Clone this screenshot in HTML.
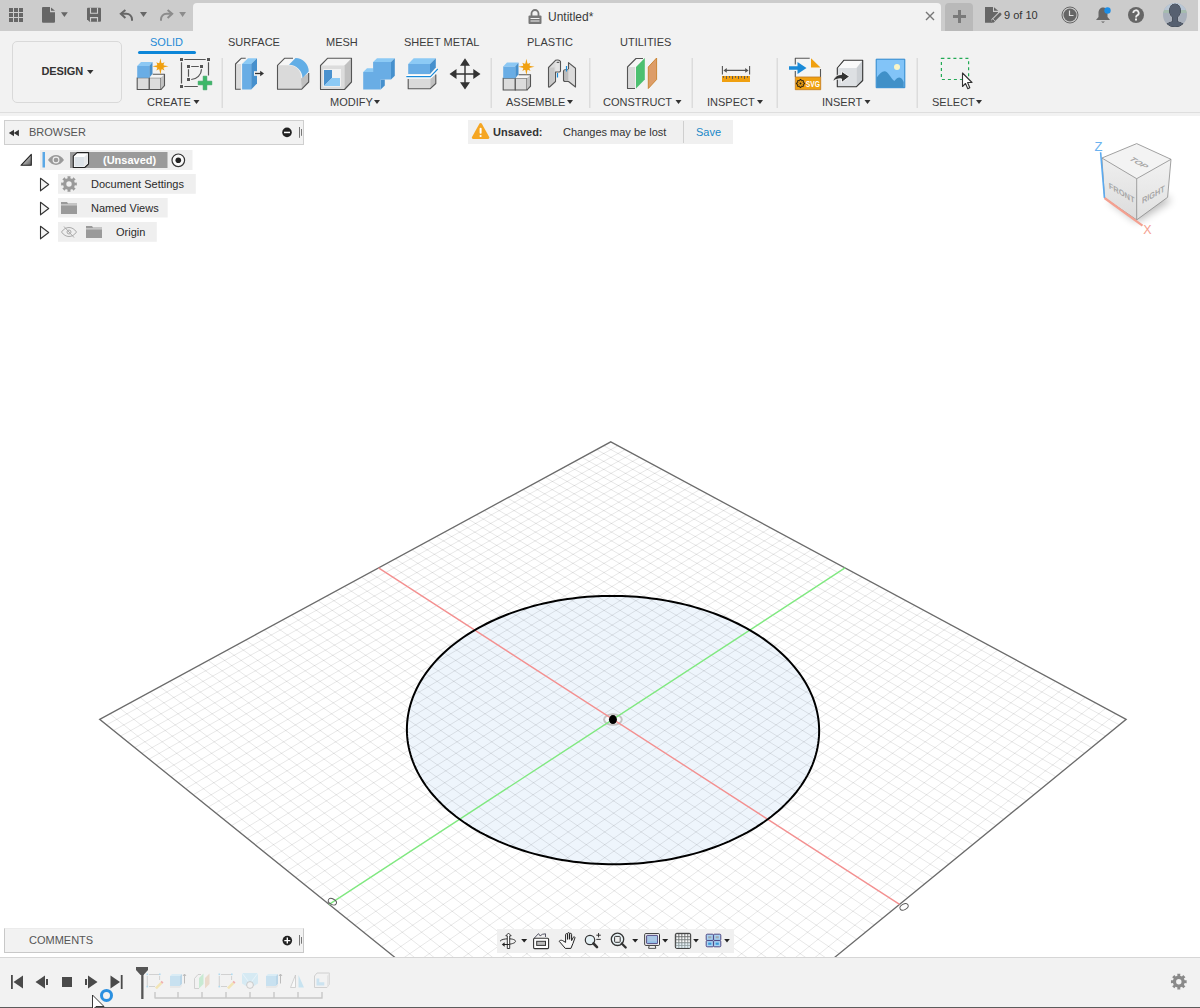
<!DOCTYPE html>
<html><head><meta charset="utf-8">
<style>
*{margin:0;padding:0;box-sizing:border-box}
html,body{width:1200px;height:1008px;overflow:hidden;background:#fff;font-family:"Liberation Sans",sans-serif;color:#3c3c3c}
.a{position:absolute}
.t{position:absolute;white-space:nowrap;line-height:1}
svg{display:block}
</style></head><body>
<!-- canvas grid -->
<svg width="1200" height="841" viewBox="0 116 1200 841" style="position:absolute;left:0;top:116px">
<path d="M767.73 819.26L771.43 816.45L775.01 813.58L778.46 810.66L781.78 807.68L784.97 804.64L788.02 801.56L790.93 798.42L793.71 795.24L796.35 792.02L798.84 788.76L801.20 785.46L803.41 782.13L805.47 778.76L807.40 775.37L809.18 771.95L810.81 768.51L812.29 765.04L813.63 761.56L814.83 758.06L815.88 754.55L816.78 751.03L817.53 747.50L818.14 743.97L818.61 740.43L818.93 736.90L819.11 733.37L819.14 729.84L819.03 726.32L818.79 722.81L818.40 719.31L817.87 715.83L817.20 712.36L816.40 708.92L815.47 705.49L814.40 702.09L813.19 698.71L811.86 695.37L810.40 692.05L808.81 688.76L807.10 685.51L805.26 682.29L803.30 679.11L801.23 675.97L799.03 672.87L796.72 669.81L794.30 666.80L791.76 663.83L789.12 660.91L786.37 658.04L783.52 655.22L780.56 652.45L777.50 649.74L774.35 647.08L771.10 644.47L767.75 641.93L764.32 639.44L760.80 637.01L757.19 634.65L753.50 632.34L749.73 630.10L745.89 627.92L741.96 625.81L737.97 623.76L733.90 621.78L729.76 619.87L725.56 618.02L721.30 616.25L716.98 614.55L712.60 612.91L708.16 611.35L703.68 609.86L699.14 608.44L694.55 607.10L689.93 605.83L685.26 604.64L680.55 603.52L675.80 602.47L671.02 601.50L666.21 600.61L661.37 599.79L656.50 599.05L651.62 598.39L646.71 597.80L641.78 597.30L636.84 596.87L631.88 596.52L626.92 596.24L621.94 596.05L616.97 595.93L611.99 595.89L607.01 595.93L602.03 596.05L597.06 596.24L592.10 596.52L587.15 596.87L582.22 597.30L577.30 597.81L572.40 598.39L567.52 599.05L562.66 599.79L557.84 600.61L553.04 601.50L548.28 602.47L543.55 603.52L538.85 604.64L534.20 605.83L529.59 607.10L525.03 608.45L520.51 609.86L516.05 611.35L511.64 612.91L507.28 614.55L502.99 616.25L498.75 618.03L494.58 619.87L490.47 621.78L486.44 623.76L482.47 625.81L478.58 627.92L474.77 630.10L471.03 632.34L467.38 634.65L463.81 637.02L460.32 639.45L456.93 641.93L453.63 644.48L450.42 647.08L447.30 649.74L444.29 652.46L441.37 655.23L438.56 658.05L435.86 660.92L433.26 663.84L430.77 666.80L428.39 669.82L426.13 672.88L423.98 675.98L421.95 679.12L420.04 682.30L418.26 685.51L416.59 688.77L415.06 692.06L413.65 695.37L412.37 698.72L411.22 702.10L410.20 705.50L409.31 708.93L408.57 712.37L407.95 715.84L407.48 719.32L407.15 722.82L406.95 726.33L406.90 729.85L406.99 733.38L407.22 736.91L407.59 740.44L408.11 743.98L408.78 747.51L409.59 751.04L410.55 754.56L411.65 758.07L412.90 761.57L414.29 765.05L415.83 768.52L417.52 771.96L419.35 775.38L421.32 778.77L423.44 782.14L425.70 785.47L428.11 788.77L430.66 792.03L433.34 795.25L436.17 798.43L439.13 801.57L442.23 804.65L445.46 807.69L448.83 810.67L452.32 813.59L455.95 816.46L459.70 819.27L463.57 822.01L467.56 824.68L471.67 827.29L475.90 829.82L480.24 832.28L484.69 834.67L489.24 836.98L493.90 839.20L498.65 841.35L503.50 843.40L508.44 845.38L513.47 847.26L518.59 849.05L523.78 850.75L529.05 852.36L534.39 853.87L539.80 855.28L545.27 856.59L550.80 857.81L556.38 858.92L562.01 859.93L567.68 860.83L573.39 861.64L579.14 862.33L584.92 862.92L590.72 863.41L596.54 863.79L602.37 864.05L608.21 864.22L614.06 864.27L619.91 864.22L625.75 864.05L631.58 863.78L637.39 863.41L643.19 862.92L648.95 862.33L654.69 861.63L660.39 860.83L666.05 859.92L671.66 858.91L677.23 857.80L682.74 856.59L688.19 855.27L693.57 853.86L698.89 852.35L704.13 850.74L709.30 849.04L714.39 847.25L719.39 845.37L724.30 843.40L729.12 841.34L733.84 839.19L738.46 836.97L742.98 834.66L747.39 832.28L751.69 829.82L755.88 827.28L759.95 824.67L763.90 822.00Z" fill="#eef5fc"/>
<path d="M106.57 724.90L617.97 445.71M113.52 730.51L625.19 449.59M120.52 736.15L632.45 453.50M127.57 741.83L639.74 457.43M134.67 747.56L647.08 461.38M141.81 753.32L654.46 465.35M149.00 759.12L661.88 469.35M156.24 764.96L669.35 473.37M163.54 770.84L676.86 477.41M170.88 776.76L684.41 481.47M178.27 782.72L692.00 485.56M185.72 788.72L699.64 489.67M193.21 794.77L707.32 493.81M200.76 800.86L715.04 497.97M208.36 806.99L722.81 502.15M216.02 813.16L730.63 506.36M223.73 819.38L738.49 510.59M231.49 825.64L746.40 514.85M239.31 831.94L754.35 519.13M247.19 838.30L762.35 523.44M255.12 844.69L770.40 527.77M263.11 851.14L778.49 532.13M271.16 857.63L786.64 536.51M279.26 864.16L794.83 540.92M287.43 870.75L803.07 545.36M295.65 877.38L811.36 549.82M303.94 884.06L819.70 554.31M312.29 890.79L828.09 558.83M320.69 897.57L836.54 563.37M337.70 911.28L853.57 572.55M346.29 918.22L862.17 577.17M354.96 925.20L870.82 581.83M363.68 932.24L879.52 586.51M372.48 939.33L888.28 591.23M381.34 946.47L897.09 595.97M390.26 953.67L905.95 600.74M399.26 960.93L914.87 605.55M408.32 968.24L923.85 610.38M417.46 975.60L932.88 615.24M426.66 983.03L941.97 620.13M435.94 990.51L951.11 625.06M445.29 998.05L960.32 630.01M454.71 1005.64L969.58 635.00M464.20 1013.30L978.90 640.02M473.78 1021.02L988.28 645.07M483.42 1028.80L997.72 650.15M493.15 1036.64L1007.22 655.26M502.95 1044.54L1016.78 660.41M512.83 1052.51L1026.41 665.59M522.79 1060.54L1036.09 670.81M532.83 1068.64L1045.84 676.05M542.95 1076.80L1055.66 681.34M553.15 1085.03L1065.53 686.66M563.44 1093.32L1075.48 692.01M573.81 1101.69L1085.48 697.40M584.27 1110.12L1095.56 702.82M594.81 1118.62L1105.70 708.28M605.44 1127.20L1115.91 713.77" stroke="#000" stroke-opacity="0.095" stroke-width="1" fill="none"/>
<path d="M109.86 713.80L626.75 1127.20M119.98 708.30L637.25 1118.62M130.04 702.84L647.66 1110.12M140.03 697.41L657.99 1101.68M149.95 692.03L668.23 1093.32M159.81 686.67L678.39 1085.02M169.61 681.36L688.46 1076.79M179.34 676.07L698.46 1068.63M189.01 670.82L708.37 1060.53M198.62 665.61L718.21 1052.50M208.16 660.43L727.96 1044.53M217.65 655.28L737.64 1036.63M227.07 650.16L747.24 1028.79M236.43 645.08L756.77 1021.01M245.74 640.03L766.22 1013.29M254.98 635.01L775.60 1005.63M264.17 630.02L784.90 998.03M273.30 625.07L794.13 990.49M282.37 620.14L803.29 983.01M291.38 615.25L812.38 975.59M300.34 610.39L821.40 968.22M309.24 605.55L830.35 960.91M318.09 600.75L839.24 953.66M326.88 595.98L848.05 946.46M335.61 591.24L856.80 939.31M344.30 586.52L865.48 932.22M352.93 581.84L874.10 925.18M361.51 577.18L882.65 918.20M370.03 572.55L891.14 911.26M386.93 563.38L907.93 897.55M395.30 558.83L916.23 890.77M403.62 554.32L924.48 884.04M411.89 549.83L932.66 877.36M420.12 545.36L940.78 870.73M428.29 540.93L948.84 864.14M436.41 536.51L956.85 857.60M444.49 532.13L964.79 851.11M452.52 527.77L972.68 844.67M460.50 523.44L980.51 838.27M468.43 519.13L988.29 831.92M476.32 514.85L996.01 825.62M484.16 510.59L1003.68 819.35M491.96 506.36L1011.29 813.14M499.71 502.15L1018.85 806.96M507.42 497.97L1026.36 800.83M515.08 493.81L1033.81 794.74M522.70 489.67L1041.21 788.70M530.27 485.56L1048.56 782.70M537.80 481.47L1055.86 776.73M545.29 477.41L1063.11 770.81M552.73 473.37L1070.31 764.93M560.13 469.35L1077.46 759.09M567.49 465.35L1084.57 753.29M574.81 461.38L1091.62 747.53M582.09 457.43L1098.63 741.81M589.33 453.50L1105.58 736.13M596.52 449.59L1112.50 730.48M603.68 445.71L1119.36 724.87" stroke="#000" stroke-opacity="0.095" stroke-width="1" fill="none"/>
<path d="M610.80 441.85L1126.18 719.31L616.16 1135.84L99.66 719.33Z" stroke="#6b6b6b" stroke-width="1.3" fill="none"/>
<ellipse cx="612.94" cy="719.52" rx="8.9" ry="5.3" fill="#f8fbfe" stroke="#c4c4c4" stroke-width="2"/>
<path d="M378.51 567.95L899.57 904.38" stroke="#f39090" stroke-width="1.4"/>
<path d="M845.03 567.95L329.16 904.40" stroke="#80e880" stroke-width="1.4"/>
<path d="M767.73 819.26L771.43 816.45L775.01 813.58L778.46 810.66L781.78 807.68L784.97 804.64L788.02 801.56L790.93 798.42L793.71 795.24L796.35 792.02L798.84 788.76L801.20 785.46L803.41 782.13L805.47 778.76L807.40 775.37L809.18 771.95L810.81 768.51L812.29 765.04L813.63 761.56L814.83 758.06L815.88 754.55L816.78 751.03L817.53 747.50L818.14 743.97L818.61 740.43L818.93 736.90L819.11 733.37L819.14 729.84L819.03 726.32L818.79 722.81L818.40 719.31L817.87 715.83L817.20 712.36L816.40 708.92L815.47 705.49L814.40 702.09L813.19 698.71L811.86 695.37L810.40 692.05L808.81 688.76L807.10 685.51L805.26 682.29L803.30 679.11L801.23 675.97L799.03 672.87L796.72 669.81L794.30 666.80L791.76 663.83L789.12 660.91L786.37 658.04L783.52 655.22L780.56 652.45L777.50 649.74L774.35 647.08L771.10 644.47L767.75 641.93L764.32 639.44L760.80 637.01L757.19 634.65L753.50 632.34L749.73 630.10L745.89 627.92L741.96 625.81L737.97 623.76L733.90 621.78L729.76 619.87L725.56 618.02L721.30 616.25L716.98 614.55L712.60 612.91L708.16 611.35L703.68 609.86L699.14 608.44L694.55 607.10L689.93 605.83L685.26 604.64L680.55 603.52L675.80 602.47L671.02 601.50L666.21 600.61L661.37 599.79L656.50 599.05L651.62 598.39L646.71 597.80L641.78 597.30L636.84 596.87L631.88 596.52L626.92 596.24L621.94 596.05L616.97 595.93L611.99 595.89L607.01 595.93L602.03 596.05L597.06 596.24L592.10 596.52L587.15 596.87L582.22 597.30L577.30 597.81L572.40 598.39L567.52 599.05L562.66 599.79L557.84 600.61L553.04 601.50L548.28 602.47L543.55 603.52L538.85 604.64L534.20 605.83L529.59 607.10L525.03 608.45L520.51 609.86L516.05 611.35L511.64 612.91L507.28 614.55L502.99 616.25L498.75 618.03L494.58 619.87L490.47 621.78L486.44 623.76L482.47 625.81L478.58 627.92L474.77 630.10L471.03 632.34L467.38 634.65L463.81 637.02L460.32 639.45L456.93 641.93L453.63 644.48L450.42 647.08L447.30 649.74L444.29 652.46L441.37 655.23L438.56 658.05L435.86 660.92L433.26 663.84L430.77 666.80L428.39 669.82L426.13 672.88L423.98 675.98L421.95 679.12L420.04 682.30L418.26 685.51L416.59 688.77L415.06 692.06L413.65 695.37L412.37 698.72L411.22 702.10L410.20 705.50L409.31 708.93L408.57 712.37L407.95 715.84L407.48 719.32L407.15 722.82L406.95 726.33L406.90 729.85L406.99 733.38L407.22 736.91L407.59 740.44L408.11 743.98L408.78 747.51L409.59 751.04L410.55 754.56L411.65 758.07L412.90 761.57L414.29 765.05L415.83 768.52L417.52 771.96L419.35 775.38L421.32 778.77L423.44 782.14L425.70 785.47L428.11 788.77L430.66 792.03L433.34 795.25L436.17 798.43L439.13 801.57L442.23 804.65L445.46 807.69L448.83 810.67L452.32 813.59L455.95 816.46L459.70 819.27L463.57 822.01L467.56 824.68L471.67 827.29L475.90 829.82L480.24 832.28L484.69 834.67L489.24 836.98L493.90 839.20L498.65 841.35L503.50 843.40L508.44 845.38L513.47 847.26L518.59 849.05L523.78 850.75L529.05 852.36L534.39 853.87L539.80 855.28L545.27 856.59L550.80 857.81L556.38 858.92L562.01 859.93L567.68 860.83L573.39 861.64L579.14 862.33L584.92 862.92L590.72 863.41L596.54 863.79L602.37 864.05L608.21 864.22L614.06 864.27L619.91 864.22L625.75 864.05L631.58 863.78L637.39 863.41L643.19 862.92L648.95 862.33L654.69 861.63L660.39 860.83L666.05 859.92L671.66 858.91L677.23 857.80L682.74 856.59L688.19 855.27L693.57 853.86L698.89 852.35L704.13 850.74L709.30 849.04L714.39 847.25L719.39 845.37L724.30 843.40L729.12 841.34L733.84 839.19L738.46 836.97L742.98 834.66L747.39 832.28L751.69 829.82L755.88 827.28L759.95 824.67L763.90 822.00Z" fill="none" stroke="#000" stroke-width="2"/>
<ellipse cx="612.94" cy="719.52" rx="4" ry="4.4" fill="#000"/>
<ellipse cx="332.36" cy="901.70" rx="4.4" ry="2.8" transform="rotate(28 332.36 901.70)" fill="none" stroke="#555" stroke-width="0.9"/>
<ellipse cx="904.07" cy="906.88" rx="4.4" ry="2.8" transform="rotate(-28 904.07 906.88)" fill="none" stroke="#555" stroke-width="0.9"/>
</svg>

<!-- top bar -->
<div class="a" style="left:0;top:0;width:1200px;height:31px;background:#cccccc"></div>
<div class="a" style="left:1198px;top:0;width:2px;height:31px;background:#f0f0f0"></div>
<!-- document tab -->
<div class="a" style="left:193px;top:3px;width:748px;height:28px;background:#f2f2f2;border-radius:4px 4px 0 0"></div>
<div class="a" style="left:945px;top:3px;width:28px;height:28px;background:#b9b9b9;border-radius:4px 4px 0 0"></div>

<!-- toolbar -->
<div class="a" style="left:0;top:31px;width:1200px;height:85px;background:#f2f2f2"></div>
<div class="a" style="left:0;top:112px;width:1200px;height:1px;background:#dedede"></div>

<!-- timeline bar -->
<div class="a" style="left:0;top:957px;width:1200px;height:51px;background:#f2f2f2;border-top:1px solid #d6d6d6"></div>
<div class="a" style="left:0;top:1007px;width:1200px;height:1px;background:#5c5c5c"></div>

<!-- top bar icons -->
<svg class="a" style="left:9px;top:8px" width="14" height="14" viewBox="0 0 14 14" fill="#666"><rect x="0" y="0" width="4" height="4"/><rect x="5" y="0" width="4" height="4"/><rect x="10" y="0" width="4" height="4"/><rect x="0" y="5" width="4" height="4"/><rect x="5" y="5" width="4" height="4"/><rect x="10" y="5" width="4" height="4"/><rect x="0" y="10" width="4" height="4"/><rect x="5" y="10" width="4" height="4"/><rect x="10" y="10" width="4" height="4"/></svg>
<svg class="a" style="left:36px;top:2px" width="36" height="26" viewBox="36 2 36 26"><path d="M43 7h7v5.2h5V21.7a1 1 0 0 1-1 1H43a1 1 0 0 1-1-1V8a1 1 0 0 1 1-1z" fill="#666"/><path d="M51 7.5l4 3.3h-4z" fill="#666"/><path d="M61 12.2h6.8l-3.4 4.7z" fill="#666"/></svg>
<svg class="a" style="left:86px;top:7px" width="16" height="16" viewBox="86 7 16 16"><path d="M88 7.8h12a1 1 0 0 1 1 1v12a1 1 0 0 1-1 1H89.5L87 19.3V8.8a1 1 0 0 1 1-1z" fill="#666"/><path d="M90.5 7.8v5.4h7v-5.4" fill="none" stroke="#cfcfcf" stroke-width="1.1"/><path d="M90.5 21.8v-4.2h7v4.2" fill="none" stroke="#cfcfcf" stroke-width="1.1"/></svg>
<svg class="a" style="left:114px;top:2px" width="76" height="26" viewBox="114 2 76 26"><path d="M125.4 9.9l-4.6 3.9 4.6 4.3" fill="none" stroke="#666" stroke-width="2"/><path d="M121 13.8h5.5a5.5 5.5 0 0 1 5.5 5.5v1.5" fill="none" stroke="#666" stroke-width="2"/><path d="M140 12h7l-3.5 4.9z" fill="#666"/><path d="M167.6 9.9l4.6 3.9-4.6 4.3" fill="none" stroke="#8c8c8c" stroke-width="2"/><path d="M172 13.8h-5.5a5.5 5.5 0 0 0-5.5 5.5v1.5" fill="none" stroke="#8c8c8c" stroke-width="2"/><path d="M179.2 12h6.8l-3.4 4.9z" fill="#8c8c8c"/></svg>
<!-- tab content -->
<svg class="a" style="left:528px;top:9px" width="14" height="15" viewBox="0 0 14 15"><path d="M3.5 7V4.5a3.5 3.5 0 0 1 7 0V7" fill="none" stroke="#777" stroke-width="1.8"/><rect x="0.5" y="6.5" width="13" height="8.5" rx="1" fill="#777"/><rect x="2.5" y="9" width="9" height="1" fill="#f2f2f2"/><rect x="2.5" y="11.5" width="9" height="1" fill="#f2f2f2"/></svg>
<div class="t" style="left:548px;top:11px;font-size:12px;color:#3a3a3a">Untitled*</div>
<svg class="a" style="left:925px;top:11px" width="10" height="10" viewBox="0 0 10 10"><path d="M1 1L9 9M9 1L1 9" stroke="#777" stroke-width="1.4"/></svg>
<svg class="a" style="left:953px;top:10px" width="13" height="13" viewBox="0 0 13 13"><path d="M6.5 0v13M0 6.5h13" stroke="#7a7a7a" stroke-width="3"/></svg>
<svg class="a" style="left:980px;top:3px" width="24" height="24" viewBox="980 3 24 24"><path d="M985 7.1h8v4.8h5v2.2L991.5 20.5v2.3H985z" fill="#666"/><path d="M994 7.3l4.2 3.5h-4.2z" fill="#666"/><path d="M993 21.3l7-7" stroke="#cccccc" stroke-width="5.2"/><path d="M993.4 20.8l6.6-6.6" stroke="#666" stroke-width="3" stroke-linecap="round"/><path d="M991 22.9l1-3.6 2.6 2.6z" fill="#666"/><path d="M992.6 18.6l2.9 2.9" stroke="#cccccc" stroke-width="0.8"/></svg>
<div class="t" style="left:1004px;top:10px;font-size:11px;color:#333">9 of 10</div>
<svg class="a" style="left:1061px;top:6px" width="18" height="18" viewBox="0 0 18 18"><circle cx="9" cy="9" r="8" fill="none" stroke="#666" stroke-width="1"/><circle cx="9" cy="9" r="6.5" fill="#666"/><path d="M8.5 4.5v5h4" fill="none" stroke="#ddd" stroke-width="1.2"/></svg>
<svg class="a" style="left:1096px;top:6px" width="16" height="18" viewBox="0 0 16 18"><path d="M7 1.5c-3 0-4.5 2.5-4.5 5.5v4L0 14h14l-2.5-3V7C11.5 4 10 1.5 7 1.5z" fill="#666"/><path d="M5 15.5h4l-2 1.5z" fill="#666"/><circle cx="11.5" cy="4.5" r="3.2" fill="#1b8ee8"/></svg>
<svg class="a" style="left:1128px;top:7px" width="16" height="16" viewBox="0 0 16 16"><circle cx="8" cy="8" r="8" fill="#666"/><path d="M5.3 6a2.7 2.7 0 1 1 3.9 2.4c-.9.5-1.2 1-1.2 2" fill="none" stroke="#eee" stroke-width="1.8"/><rect x="7" y="11.5" width="2" height="2" fill="#eee"/></svg>
<svg class="a" style="left:1163px;top:3px" width="24" height="24" viewBox="1163 3 24 24"><defs><clipPath id="av"><circle cx="1175" cy="15" r="12"/></clipPath></defs><g clip-path="url(#av)"><rect x="1163" y="3" width="24" height="24" fill="#a9b0bb"/><rect x="1163" y="3" width="24" height="7" fill="#b9c7d6"/><rect x="1163" y="10" width="24" height="3" fill="#a6bcaf"/><ellipse cx="1175" cy="10.8" rx="5.8" ry="7"/><path d="M1172.3 16h5.4v5.5c2.5.6 4.8 1.6 6.3 2.8L1181 27h-12l-3-2.7c1.5-1.2 3.8-2.2 6.3-2.8z"/></g><g clip-path="url(#av)" fill="#566070"><ellipse cx="1175" cy="10.8" rx="5.8" ry="7"/><path d="M1172.3 16h5.4v5.5c2.5.6 4.8 1.6 6.3 2.8L1181 27h-12l-3-2.7c1.5-1.2 3.8-2.2 6.3-2.8z"/></g></svg>

<!-- toolbar: design box, tabs -->
<div class="a" style="left:12px;top:41px;width:110px;height:62px;border:1px solid #d9d9d9;border-radius:5px;background:#f2f2f2"></div>
<div class="t" style="left:41.5px;top:66px;font-size:11px;font-weight:bold;color:#333;letter-spacing:-0.1px">DESIGN</div>
<svg class="a" style="left:87px;top:70px" width="7" height="5" viewBox="0 0 7 5"><path d="M0 0h6.5L3.25 4z" fill="#333"/></svg>
<div class="t" style="left:150px;top:37px;font-size:11px;color:#1e8ad6">SOLID</div>
<div class="a" style="left:138px;top:51px;width:58px;height:3px;background:#0d86d8;border-radius:2px"></div>
<div class="t" style="left:228px;top:37px;font-size:11px;color:#3c3c3c">SURFACE</div>
<div class="t" style="left:326px;top:37px;font-size:11px;color:#3c3c3c">MESH</div>
<div class="t" style="left:404px;top:37px;font-size:11px;color:#3c3c3c">SHEET METAL</div>
<div class="t" style="left:527px;top:37px;font-size:11px;color:#3c3c3c">PLASTIC</div>
<div class="t" style="left:620px;top:37px;font-size:11px;color:#3c3c3c">UTILITIES</div>
<!-- group labels -->
<div class="t" style="left:147px;top:97px;font-size:11px;color:#3c3c3c">CREATE</div>
<div class="t" style="left:330px;top:97px;font-size:11px;color:#3c3c3c">MODIFY</div>
<div class="t" style="left:506px;top:97px;font-size:11px;color:#3c3c3c">ASSEMBLE</div>
<div class="t" style="left:603px;top:97px;font-size:11px;color:#3c3c3c">CONSTRUCT</div>
<div class="t" style="left:707px;top:97px;font-size:11px;color:#3c3c3c">INSPECT</div>
<div class="t" style="left:822px;top:97px;font-size:11px;color:#3c3c3c">INSERT</div>
<div class="t" style="left:932px;top:97px;font-size:11px;color:#3c3c3c">SELECT</div>

<svg class="a" style="left:0;top:31px" width="1200" height="85" viewBox="0 31 1200 85">
<g fill="#333">
<path d="M193.5 100h6l-3 4z"/><path d="M374 100h6l-3 4z"/><path d="M567 100h6l-3 4z"/><path d="M675.5 100h6l-3 4z"/><path d="M757 100h6l-3 4z"/><path d="M864.5 100h6l-3 4z"/><path d="M976 100h6l-3 4z"/>
</g>
<g fill="#dcdcdc"><rect x="221.5" y="58" width="1.5" height="50"/><rect x="490.5" y="58" width="1.5" height="50"/><rect x="589" y="58" width="1.5" height="50"/><rect x="691.5" y="58" width="1.5" height="50"/><rect x="776.5" y="58" width="1.5" height="50"/><rect x="916.5" y="58" width="1.5" height="50"/></g>
<g stroke-linejoin="round">
<!-- create: new component -->
<g transform="translate(134 54)">
<path d="M3.2 23.8h12.1v11.7H3.2z" fill="#dcdcdc" stroke="#555" stroke-width="1.1"/>
<path d="M15.3 23.8h11.7v11.7H15.3z" fill="#dcdcdc" stroke="#555" stroke-width="1.1"/>
<path d="M15.3 23.8l3.4-3.5h11.8l-3.5 3.5z" fill="#f4f4f4"/>
<path d="M27 23.8l3.5-3.5v11.4L27 35.5z" fill="#c2c2c2"/>
<path d="M18.7 20.3h11.8v11.4L27 35.5" fill="none" stroke="#555" stroke-width="1.1"/>
<path d="M3.2 11.9h12.1v11.9H3.2z" fill="#69ade5"/>
<path d="M3.2 11.9L7 8.1h11.5l-3.2 3.8z" fill="#8cc8f4"/>
<path d="M15.3 11.9l3.2-3.8v11.7l-3.2 4z" fill="#4690cd"/>
<path d="M26.40 4.20L27.55 9.53L30.50 8.20L29.17 11.15L34.50 12.30L29.17 13.45L30.50 16.40L27.55 15.07L26.40 20.40L25.25 15.07L22.30 16.40L23.63 13.45L18.30 12.30L23.63 11.15L22.30 8.20L25.25 9.53z" fill="#f0a010"/><circle cx="26.4" cy="12.3" r="3.3" fill="#f0a010"/>
</g>
<!-- create sketch -->
<g transform="translate(176 54)">
<g fill="#555"><rect x="4" y="4" width="3" height="3"/><rect x="31" y="4" width="3" height="3"/><rect x="4" y="31" width="3" height="3"/><rect x="11" y="11" width="3" height="3"/><rect x="24" y="11" width="3" height="3"/><rect x="11" y="24" width="3" height="3"/></g>
<path d="M8.3 5.5h21.4M5.5 8.3v21.3M32.5 8.3v13.3M8.3 32.5h13.5M15.2 12.5h7.6M12.5 15.2v7.6M25.5 15.2A10.5 10.5 0 0 1 15.2 25.5" fill="none" stroke="#555" stroke-width="1.2"/>
<path d="M27.2 22.2h3.6v5h5v3.6h-5v5h-3.6v-5h-5v-3.6h5z" fill="#3cb868" stroke="#2a9a55" stroke-width="0.6"/>
</g>
<!-- press pull -->
<g transform="translate(232 54)">
<path d="M3.5 10l5.7-5.7h4.5L9 10z" fill="#f6f6f6"/>
<rect x="3.5" y="10" width="5.5" height="25.3" fill="#dcdcdc"/>
<path d="M8.7 35.3H3.5V10l5.7-5.7h4.5" fill="none" stroke="#555" stroke-width="1.1"/>
<rect x="10.1" y="9.9" width="9.1" height="25.6" fill="#69ade5"/>
<path d="M10.1 9.9L16 4.2h9l-5.8 5.7z" fill="#8ccaf5"/>
<path d="M19.2 9.9L25 4.2v25.3l-5.8 6z" fill="#4690cd"/>
<rect x="22" y="17.2" width="4" height="4.6" fill="#f2f2f2"/>
<path d="M23 19.5h6" stroke="#333" stroke-width="1.3"/>
<path d="M28.2 16.8l3.8 2.7-3.8 2.7z" fill="#333"/>
</g>
<!-- fillet -->
<g transform="translate(274 54)">
<path d="M3.5 11.3l7-7h11l-6.5 6.5z" fill="#f6f6f6"/>
<path d="M3.5 11.3H15a12 12 0 0 1 12 12v12H3.5z" fill="#dadada"/>
<path d="M27 24.5l7.7-5.5v9l-7.2 7.3z" fill="#c0c0c0"/>
<path d="M15 10.8l6.5-6.7a13.5 13.5 0 0 1 13.2 13.4l-6.2 6.5A13.5 13.5 0 0 0 15 10.8z" fill="#62aee6"/>
<path d="M19 4.3h-8.5l-7 7v24H27.5l7.2-7.3V19" fill="none" stroke="#555" stroke-width="1.1"/>
</g>
<!-- shell -->
<g transform="translate(316 54)">
<path d="M4.5 11.5l7-7.2h24l-7 7.2z" fill="#f4f4f4"/>
<rect x="4.5" y="11.5" width="24" height="24" fill="#dcdcdc"/>
<path d="M28.5 11.5l7-7.2V28l-7 7.5z" fill="#c0c0c0"/>
<path d="M4.5 11.5l7-7.2h24V28l-7 7.5h-24z" fill="none" stroke="#555" stroke-width="1.1"/>
<rect x="7.2" y="15" width="17.8" height="17.7" fill="#f2f2f2"/>
<path d="M8 16h8v8l-8 8z" fill="#4a92cf"/>
<path d="M16 24h8v8H8z" fill="#8ccaf5"/>
</g>
<!-- combine -->
<g transform="translate(360 54)">
<path d="M13.1 8.1L17 4.2h17.8L31 8.1z" fill="#8ccaf5"/>
<path d="M31 8.1l3.8-3.9v17.5L31 25.5z" fill="#4690cd"/>
<path d="M3.2 18L7 14.2h6.1V18z" fill="#8ccaf5"/>
<path d="M20.7 25.5h4.1v6l-4.1 4.1z" fill="#4690cd"/>
<path d="M13.1 8.1H31v17.4H20.7v10.1H3.2V18h9.9z" fill="#69ade5"/>
</g>
<!-- split -->
<g transform="translate(402 54)">
<path d="M6.2 10l5.5-5.8h22.1L28 10z" fill="#8ccaf5"/>
<rect x="6.2" y="10" width="21.8" height="10" fill="#69ade5"/>
<path d="M28 10l5.8-5.8v9.3L28 20z" fill="#4690cd"/>
<rect x="6.2" y="25" width="22.1" height="9.7" fill="#dadada"/>
<path d="M28.3 25l5.5-4.5v9L28.3 34.7z" fill="#c0c0c0"/>
<path d="M6.2 25v9.7h22.1l5.5-5.2v-9" fill="none" stroke="#555" stroke-width="1.1"/>
<path d="M4.3 22.6h24.2l7.3-7.6" fill="none" stroke="#fff" stroke-width="3"/>
<path d="M4.3 22.6h24.2l7.3-7.6" fill="none" stroke="#1a8ad8" stroke-width="1.2"/>
</g>
<!-- move -->
<g transform="translate(445 54)" fill="#333">
<path d="M7 19.3h26v1.4H7zM19.3 7h1.4v26h-1.4z"/>
<path d="M4.5 20l7-5v10zM35.5 20l-7.2-5v10zM20 4.3l-5 7.4h10zM20 35.5l-5-7.2h10z"/>
</g>
</g>
<!-- assemble new comp -->
<g transform="translate(500 54.5)">
<path d="M3.2 23.8h12.1v11.7H3.2z" fill="#dcdcdc" stroke="#555" stroke-width="1.1"/>
<path d="M15.3 23.8h11.7v11.7H15.3z" fill="#dcdcdc" stroke="#555" stroke-width="1.1"/>
<path d="M15.3 23.8l3.4-3.5h11.8l-3.5 3.5z" fill="#f4f4f4"/>
<path d="M27 23.8l3.5-3.5v11.4L27 35.5z" fill="#c2c2c2"/>
<path d="M18.7 20.3h11.8v11.4L27 35.5" fill="none" stroke="#555" stroke-width="1.1"/>
<path d="M3.2 11.9h12.1v11.9H3.2z" fill="#69ade5"/>
<path d="M3.2 11.9L7 8.1h11.5l-3.2 3.8z" fill="#8cc8f4"/>
<path d="M15.3 11.9l3.2-3.8v11.7l-3.2 4z" fill="#4690cd"/>
<path d="M26.40 4.20L27.55 9.53L30.50 8.20L29.17 11.15L34.50 12.30L29.17 13.45L30.50 16.40L27.55 15.07L26.40 20.40L25.25 15.07L22.30 16.40L23.63 13.45L18.30 12.30L23.63 11.15L22.30 8.20L25.25 9.53z" fill="#f0a010"/><circle cx="26.4" cy="12.3" r="3.3" fill="#f0a010"/>
</g>
<g stroke-linejoin="round">
<!-- joint -->
<g transform="translate(545 54)">
<path d="M3.5 13.5l7-7h5v11.5h-5v9.5l-6 6h-1z" fill="#dcdcdc"/>
<path d="M3.5 13.5v19l6-5.2V13.5z" fill="#c8c8c8"/>
<path d="M10.5 6.5h5v11.5h-5z" fill="#e4e4e4"/>
<path d="M15.5 7.5v9.5a1.5 1.5 0 0 1-1.5 1h-3.5v9.5l-6 5.5H3.5V13.5l7-7.2c1.2-.5 3.8-.5 5 1.2z" fill="none" stroke="#555" stroke-width="1.1"/>
<ellipse cx="13" cy="8.3" rx="1.6" ry="0.6" fill="#555"/>
<path d="M12.5 19v4.5" stroke="#1a8ad8" stroke-width="1.2"/>
<path d="M23.5 9l7 5.5V33l-7-5.5z" fill="#dcdcdc"/>
<path d="M18.5 16.5h5v11h-5z" fill="#bdbdbd"/>
<path d="M23.5 15V8.6l7 5.6V33l-7-5.5h-4l-1-1V17a1.5 1.5 0 0 1 1.5-1.2h3.5" fill="none" stroke="#555" stroke-width="1.1"/>
<path d="M21.5 12v5.5" stroke="#1a8ad8" stroke-width="1.2"/>
</g>
<!-- construct -->
<g transform="translate(622 54)">
<path d="M5.5 13l8.5-8.5h8.5L14 13z" fill="#f6f6f6"/>
<rect x="5.5" y="13" width="7.5" height="21.5" fill="#dadada"/>
<path d="M13 34.5H5.5V13l8.5-8.5h7" fill="none" stroke="#555" stroke-width="1.1"/>
<path d="M14 13l8.8-9v21.5L14 34.5z" fill="#4cc070"/>
<path d="M26.3 13l8.3-9v21.5l-8.3 9z" fill="#dd9d68" stroke="#c8802a" stroke-width="0.9"/>
</g>
<!-- inspect -->
<g transform="translate(716 54)">
<path d="M6.4 12v8.5M33.6 12v8.5M9 16.4h22" stroke="#555" stroke-width="1.1"/>
<path d="M7.4 16.4l3.4-2.4v4.8zM32.6 16.4l-3.4-2.4v4.8z" fill="#555"/>
<rect x="6" y="22" width="28" height="6" fill="#f0a010"/>
<path d="M7.5 22v1.8M10.5 22v3M13.5 22v1.8M16.5 22v3M19.5 22v1.8M22.5 22v3M25.5 22v1.8M28.5 22v3M31.5 22v1.8" stroke="#555" stroke-width="0.9"/>
</g>
<!-- insert svg -->
<g transform="translate(785 54)">
<path d="M10.3 4.3h15l10.2 10v9H10.3z" fill="#f4f4f4"/>
<path d="M10.3 10.5V4.3h14.4M10.3 17v6M35.5 15v8" fill="none" stroke="#555" stroke-width="1.1"/>
<path d="M26 4.3l9.5 9.2H26z" fill="#f0a010"/>
<path d="M4 12.2h8.5V8l9 6-9 6v-4.2H4z" fill="#1a8ad8"/>
<rect x="10.3" y="23" width="25.4" height="12.7" fill="#f0a010" stroke="#c07a20" stroke-width="0.8"/>
<path d="M18.32 28.82L19.56 28.92L19.56 30.08L18.32 30.18L17.97 31.02L18.78 31.96L17.96 32.78L17.02 31.97L16.18 32.32L16.08 33.56L14.92 33.56L14.82 32.32L13.98 31.97L13.04 32.78L12.22 31.96L13.03 31.02L12.68 30.18L11.44 30.08L11.44 28.92L12.68 28.82L13.03 27.98L12.22 27.04L13.04 26.22L13.98 27.03L14.82 26.68L14.92 25.44L16.08 25.44L16.18 26.68L17.02 27.03L17.96 26.22L18.78 27.04L17.97 27.98Z" fill="none" stroke="#2a2010" stroke-width="1"/><circle cx="15.5" cy="29.5" r="1" fill="#2a2010"/>
<text x="20.8" y="33.2" font-family="Liberation Sans" font-weight="bold" font-size="8.6" fill="#fff" textLength="14" lengthAdjust="spacingAndGlyphs">SVG</text>
</g>
<!-- insert mesh -->
<g transform="translate(828 54)">
<path d="M9.3 14L16 6.2h18.7L28.5 14z" fill="#fafafa"/>
<rect x="9.3" y="14" width="19.2" height="18.7" fill="#dde0e3"/>
<path d="M28.5 14l6.2-7.8v20.3l-6.2 6.2z" fill="#ccd0d4"/>
<path d="M9.3 14L16 6.2h18.7v20.3l-6.2 6.2H9.3z" fill="none" stroke="#333" stroke-width="1.1"/>
<path d="M4.5 27.5c2-5 5-7 9-7v-3.2l8 5.2-8 6v-3.6c-3.5-.5-6.5 1-9 2.6z" fill="#333" stroke="#fff" stroke-width="0.9"/>
</g>
<!-- canvas -->
<g transform="translate(870 54)">
<rect x="6.2" y="5.2" width="28.6" height="28.5" fill="#82c4f8" stroke="#2a86cc" stroke-width="1"/>
<path d="M6.7 23.5c3-4 5-6.3 7.8-6.3 3.5 0 6 6.5 9.8 9.8 2-2.5 3.5-3.5 5-3.5 2.3 0 3.5 2.5 4.4 4.5v5.2H6.7z" fill="#4090c8"/>
<circle cx="27" cy="13" r="3" fill="#f8f4c8"/>
</g>
<!-- select -->
<g transform="translate(935 54)">
<rect x="6.4" y="4.4" width="27.2" height="21.1" fill="none" stroke="#22aa55" stroke-width="1.2" stroke-dasharray="3 3"/>
<path d="M27.5 19v13.5l3-3 2.3 5.3 2-1-2.2-5.3H37z" fill="#fff" stroke="#333" stroke-width="1.1"/>
</g>
</g>
<!--ICONS-->
</svg>

<!-- browser panel -->
<div class="a" style="left:4px;top:120px;width:300px;height:25px;background:#f2f2f2;border:1px solid #cfcfcf"></div>
<div class="t" style="left:29px;top:127px;font-size:11px;color:#555">BROWSER</div>
<svg class="a" style="left:0;top:116px" width="320" height="130" viewBox="0 116 320 130">
<path d="M8.8 133L14 129.8v6.4zM13.7 133l5.2-3.2v6.4z" fill="#333"/>
<circle cx="287" cy="132.4" r="4.8" fill="#222"/><rect x="284" y="131.7" width="6" height="1.5" fill="#fff"/>
<rect x="299" y="127" width="1" height="10.8" fill="#777"/><rect x="301" y="129" width="1" height="6.8" fill="#777"/>
<!-- row 1 -->
<rect x="40" y="150" width="152.5" height="20" fill="#efefef"/>
<defs><linearGradient id="tg" x1="0" y1="0" x2="1" y2="1"><stop offset="0.3" stop-color="#d8d8d8"/><stop offset="1" stop-color="#555"/></linearGradient></defs><path d="M21 165.3L31.3 154.3v11z" fill="url(#tg)" stroke="#222" stroke-width="1.1" stroke-linejoin="round"/>
<rect x="42.5" y="152" width="2.5" height="15.5" fill="#5aa8e6"/>
<path d="M48 160c2.2-3.2 5-4.9 8-4.9s5.8 1.7 8 4.9c-2.2 3.2-5 4.9-8 4.9s-5.8-1.7-8-4.9z" fill="#9a9a9a"/>
<circle cx="56" cy="160" r="2.9" fill="none" stroke="#efefef" stroke-width="1.1"/>
<rect x="70" y="152" width="97.5" height="16" fill="#9a9a9a"/>
<path d="M73.3 156.2l3.8-3.6h11.4v11.4l-3.8 3.5H73.3z" fill="#fff" stroke="#222" stroke-width="1.1" stroke-linejoin="round"/><rect x="74.5" y="157" width="9.6" height="9.6" fill="#dde3e8"/><path d="M84.1 157l3.5-3.4v10l-3.5 3z" fill="#e6e8ea"/>
<circle cx="178.3" cy="160.3" r="6.3" fill="#fafafa" stroke="#333" stroke-width="1.2"/><circle cx="178.3" cy="160.3" r="2.8" fill="#222"/>
<!-- row 2 -->
<rect x="58" y="174" width="137.8" height="19.8" fill="#efefef"/>
<path d="M40.5 178.2l8.2 6.3-8.2 6.3z" fill="#f4f4f4" stroke="#333" stroke-width="1.1" stroke-linejoin="round"/>
<!-- row 3 -->
<rect x="58" y="198" width="109.7" height="19.5" fill="#efefef"/>
<path d="M40.5 202.2l8.2 6.3-8.2 6.3z" fill="#f4f4f4" stroke="#333" stroke-width="1.1" stroke-linejoin="round"/>
<path d="M61 202h6l1 1.5h9v10.5H61z" fill="#9a9a9a"/><rect x="61" y="204.5" width="16" height="0.8" fill="#efefef"/>
<!-- row 4 -->
<rect x="58" y="222" width="98.8" height="19.8" fill="#efefef"/>
<path d="M40.5 226.2l8.2 6.3-8.2 6.3z" fill="#f4f4f4" stroke="#333" stroke-width="1.1" stroke-linejoin="round"/>
<path d="M86 226h6l1 1.5h9v10.5H86z" fill="#9a9a9a"/><rect x="86" y="228.5" width="16" height="0.8" fill="#efefef"/>
<path d="M61.5 232c2-3 4.8-4.5 7.5-4.5s5.5 1.5 7.5 4.5c-2 3-4.8 4.5-7.5 4.5s-5.5-1.5-7.5-4.5z" fill="none" stroke="#aaa" stroke-width="1"/>
<circle cx="69" cy="232" r="2" fill="none" stroke="#aaa" stroke-width="1"/>
<path d="M64 226.5l10 11" stroke="#aaa" stroke-width="1"/>
<path d="M74.85 182.66L76.85 182.44L76.85 185.56L74.85 185.34L74.08 187.19L75.65 188.44L73.44 190.65L72.19 189.08L70.34 189.85L70.56 191.85L67.44 191.85L67.66 189.85L65.81 189.08L64.56 190.65L62.35 188.44L63.92 187.19L63.15 185.34L61.15 185.56L61.15 182.44L63.15 182.66L63.92 180.81L62.35 179.56L64.56 177.35L65.81 178.92L67.66 178.15L67.44 176.15L70.56 176.15L70.34 178.15L72.19 178.92L73.44 177.35L75.65 179.56L74.08 180.81ZM71.70 184.00a2.7 2.7 0 1 0 -5.40 0a2.7 2.7 0 1 0 5.40 0z" fill="#9a9a9a" fill-rule="evenodd"/>
</svg>
<div class="t" style="left:103px;top:155px;font-size:11px;font-weight:bold;color:#fff">(Unsaved)</div>
<div class="t" style="left:91px;top:179px;font-size:11px;color:#2a2a2a">Document Settings</div>
<div class="t" style="left:91px;top:203px;font-size:11px;color:#2a2a2a">Named Views</div>
<div class="t" style="left:116px;top:227px;font-size:11px;color:#2a2a2a">Origin</div>

<!-- unsaved banner -->
<div class="a" style="left:468px;top:120px;width:265px;height:24px;background:#f0f0f0"></div>
<div class="a" style="left:682.5px;top:121px;width:1.2px;height:22px;background:#cfcfcf"></div>
<svg class="a" style="left:470px;top:122px" width="20" height="18" viewBox="0 0 20 18"><path d="M9.5 1.5a1.3 1.3 0 0 1 2.2 0l7.5 13.5a1.3 1.3 0 0 1-1.1 1.9H3.1A1.3 1.3 0 0 1 2 15z" fill="#f5a623"/><rect x="9.6" y="5.8" width="2" height="6" rx="1" fill="#fff"/><circle cx="10.6" cy="14" r="1.1" fill="#fff"/></svg>
<div class="t" style="left:493px;top:127px;font-size:11px;font-weight:bold;color:#333">Unsaved:</div>
<div class="t" style="left:563px;top:127px;font-size:11px;color:#333">Changes may be lost</div>
<div class="t" style="left:696px;top:127px;font-size:11px;color:#1a88c8">Save</div>

<svg class="a" style="left:1160px;top:965px" width="40" height="35" viewBox="1160 965 40 35"><path d="M1184.65 980.36L1186.65 980.14L1186.65 983.26L1184.65 983.04L1183.88 984.89L1185.45 986.14L1183.24 988.35L1181.99 986.78L1180.14 987.55L1180.36 989.55L1177.24 989.55L1177.46 987.55L1175.61 986.78L1174.36 988.35L1172.15 986.14L1173.72 984.89L1172.95 983.04L1170.95 983.26L1170.95 980.14L1172.95 980.36L1173.72 978.51L1172.15 977.26L1174.36 975.05L1175.61 976.62L1177.46 975.85L1177.24 973.85L1180.36 973.85L1180.14 975.85L1181.99 976.62L1183.24 975.05L1185.45 977.26L1183.88 978.51ZM1181.50 981.70a2.7 2.7 0 1 0 -5.40 0a2.7 2.7 0 1 0 5.40 0z" fill="#8a8a8a" fill-rule="evenodd"/></svg>
<!-- view cube -->
<svg class="a" style="left:1060px;top:120px" width="140" height="130" viewBox="1060 120 140 130">
<defs>
<filter id="sh" x="-50%" y="-50%" width="200%" height="200%"><feGaussianBlur stdDeviation="4"/></filter>
<linearGradient id="gf" x1="0" y1="0" x2="0" y2="1"><stop offset="0" stop-color="#efefef"/><stop offset="1" stop-color="#dcdcdc"/></linearGradient>
<linearGradient id="gr" x1="0" y1="0" x2="0" y2="1"><stop offset="0" stop-color="#f2f2f2"/><stop offset="1" stop-color="#e0e0e0"/></linearGradient>
</defs>
<path d="M1108 200L1137 222L1172 200L1150 190z" fill="#000" opacity="0.28" filter="url(#sh)"/>
<path d="M1136.7 143.6L1171 159.3L1136.7 178.7L1101.9 158z" fill="#f3f3f3"/>
<path d="M1101.9 158L1136.7 178.7L1136.7 219.9L1104.5 198z" fill="url(#gf)"/>
<path d="M1136.7 178.7L1171 159.3L1167.6 197.3L1136.7 219.9z" fill="url(#gr)"/>
<path d="M1136.7 143.6L1171 159.3L1167.6 197.3L1136.7 219.9L1104.5 198L1101.9 158zM1101.9 158L1136.7 178.7L1171 159.3M1136.7 178.7V219.9" fill="none" stroke="#8a8a8a" stroke-width="0.8" stroke-linejoin="round"/>
<g font-family="Liberation Sans" fill="#9a9a9a" text-anchor="middle">
<text transform="matrix(0.87 0.5175 0.065 1 1101.9 158)" x="21" y="27" font-size="8.6" font-weight="bold" fill-opacity="0.85">FRONT</text>
<text transform="matrix(0.8575 -0.485 0 1.03 1136.7 178.7)" x="19.5" y="27.5" font-size="8.6" font-weight="bold" fill-opacity="0.85">RIGHT</text>
<text transform="matrix(0.87 0.5175 -0.87 0.36 1136.7 143.6)" x="23" y="23.5" font-size="9" font-weight="bold" fill-opacity="0.85">TOP</text>
</g>
<path d="M1100.6 152.2L1104.5 198" stroke="#5aaaf0" stroke-width="1.6"/>
<path d="M1104.5 198L1142.5 225.7" stroke="#f4a090" stroke-width="2.2"/>
<text x="1098.6" y="150.5" font-family="Liberation Sans" font-size="13" fill="#6ab2f0" text-anchor="middle">Z</text>
<text x="1147.3" y="234.2" font-family="Liberation Sans" font-size="12.5" fill="#f4a090" text-anchor="middle">X</text>
</svg>

<!-- comments panel -->
<div class="a" style="left:4px;top:928px;width:300px;height:25px;background:#f2f2f2;border:1px solid #c8c8c8;border-top-color:#ebebeb"></div>
<div class="t" style="left:29px;top:935px;font-size:11px;color:#555">COMMENTS</div>
<svg class="a" style="left:270px;top:928px" width="40" height="25" viewBox="270 928 40 25">
<circle cx="287.3" cy="940.6" r="4.8" fill="#222"/><path d="M284.3 940.6h6M287.3 937.6v6" stroke="#fff" stroke-width="1.4"/>
<rect x="299" y="935" width="1" height="10.5" fill="#777"/><rect x="301" y="937" width="1" height="6.7" fill="#777"/>
</svg>

<!-- nav toolbar -->
<div class="a" style="left:497px;top:929px;width:237px;height:23.5px;background:#f0f0f0"></div>
<svg class="a" style="left:497px;top:929px" width="240" height="24" viewBox="497 929 240 24">
<g transform="translate(497 929)">
<path d="M3 12.3c1-1.8 4.5-2.5 8.5-2.5 4 0 7 1 7 2.5 0 1.5-3 2.6-7 3" fill="none" stroke="#333" stroke-width="1"/>
<path d="M10.3 19.5V6.8H8.8l2.7-2.7 2.7 2.7h-1.5v12.7z" fill="#fff" stroke="#222" stroke-width="0.9" stroke-linejoin="round"/>
<path d="M12.5 15.5H7" stroke="#222" stroke-width="1"/>
<path d="M4.8 15.5l2.8-2.2v4.4z" fill="#222"/>
<path d="M24.2 10h6l-3 3.6z" fill="#222"/>
<path d="M37.2 9.2L41.5 4.6l1.6 2.3 2.3-1.6 3.1-.5V8" fill="none" stroke="#445" stroke-width="0.9"/>
<rect x="36.6" y="9.3" width="15" height="10.3" rx="1" fill="#fff" stroke="#333" stroke-width="1.1"/>
<rect x="39.7" y="12.3" width="8.8" height="4.1" fill="#bbb" stroke="#333" stroke-width="1"/>
</g>
<g transform="translate(555 929)">
<path d="M10.3 19.4h5.6l2-4.8 2-5.6c.4-1.1-1-1.8-1.6-.7l-1.7 3.3V5.3c0-1.3-2-1.3-2 0v5V4.6c0-1.3-2-1.3-2 0v5.8V5.6c0-1.3-2-1.3-2 0v7.8L7.8 11.7c-1.2-.9-3.8-.3-3.5.7z" fill="#f8f8f8" stroke="#222" stroke-width="1" stroke-linejoin="round"/>
<circle cx="35" cy="11" r="4.7" fill="#e4f0f4" stroke="#333" stroke-width="1.2"/>
<path d="M38.5 14.5l3.5 3.6" stroke="#333" stroke-width="2.6" stroke-linecap="round"/>
<path d="M41.3 6.2h4.5M43.55 4v4.4M41.3 10.4h4.5" stroke="#222" stroke-width="0.9"/>
</g>
<g transform="translate(608 929)">
<circle cx="9.5" cy="10.3" r="6.2" fill="#eaf4f7" stroke="#333" stroke-width="1.3"/>
<rect x="6.6" y="7.4" width="5.6" height="5.9" rx="0.8" fill="#eee" stroke="#333" stroke-width="1"/>
<path d="M13.7 14.5l4 4" stroke="#333" stroke-width="2.3" stroke-linecap="round"/>
<path d="M24.2 10h6l-3 3.6z" fill="#222"/>
<rect x="36.7" y="4.6" width="14.8" height="11.8" rx="1" fill="#fff" stroke="#333" stroke-width="1"/>
<rect x="38.6" y="6.4" width="11" height="8.2" rx="0.6" fill="#a9c7e6" stroke="#453a78" stroke-width="0.9"/>
<rect x="39.2" y="12.7" width="9.8" height="0.8" fill="#7ab8e8"/>
<path d="M41.2 16.6h6l.6 2.7h-7.2z" fill="#fff" stroke="#333" stroke-width="0.9"/>
<path d="M54.2 10h6l-3 3.6z" fill="#222"/>
</g>
<g transform="translate(670 929)">
<defs><linearGradient id="gg" x1="0" y1="0" x2="0" y2="1"><stop offset="0" stop-color="#555"/><stop offset="1" stop-color="#9aa"/></linearGradient></defs>
<rect x="5.3" y="4.3" width="15.4" height="15.2" rx="1.5" fill="url(#gg)" stroke="#333" stroke-width="0.9"/>
<g fill="#fafafa"><rect x="6.3" y="5.2" width="2.1" height="2.1"/><rect x="9.3" y="5.2" width="2.1" height="2.1"/><rect x="12.3" y="5.2" width="2.1" height="2.1"/><rect x="15.3" y="5.2" width="2.1" height="2.1"/><rect x="18.2" y="5.2" width="1.7" height="2.1"/>
<rect x="6.3" y="8.2" width="2.1" height="2.1"/><rect x="9.3" y="8.2" width="2.1" height="2.1"/><rect x="12.3" y="8.2" width="2.1" height="2.1"/><rect x="15.3" y="8.2" width="2.1" height="2.1"/><rect x="18.2" y="8.2" width="1.7" height="2.1"/>
<rect x="6.3" y="11.2" width="2.1" height="2.1"/><rect x="9.3" y="11.2" width="2.1" height="2.1"/><rect x="12.3" y="11.2" width="2.1" height="2.1"/><rect x="15.3" y="11.2" width="2.1" height="2.1"/><rect x="18.2" y="11.2" width="1.7" height="2.1"/>
<rect x="6.3" y="14.2" width="2.1" height="2.1" fill="#e4eef4"/><rect x="9.3" y="14.2" width="2.1" height="2.1" fill="#e4eef4"/><rect x="12.3" y="14.2" width="2.1" height="2.1" fill="#e4eef4"/><rect x="15.3" y="14.2" width="2.1" height="2.1" fill="#e4eef4"/><rect x="18.2" y="14.2" width="1.7" height="2.1" fill="#e4eef4"/>
<rect x="6.3" y="17" width="2.1" height="1.8" fill="#e4eef4"/><rect x="9.3" y="17" width="2.1" height="1.8" fill="#e4eef4"/><rect x="12.3" y="17" width="2.1" height="1.8" fill="#e4eef4"/><rect x="15.3" y="17" width="2.1" height="1.8" fill="#e4eef4"/><rect x="18.2" y="17" width="1.7" height="1.8" fill="#e4eef4"/></g>
<path d="M23.2 10h5.6l-2.8 3.4z" fill="#222"/>
<rect x="36.2" y="5.2" width="7.2" height="6.2" rx="1" fill="#a9d4f4" stroke="#453a78" stroke-width="0.9"/>
<rect x="43.6" y="5.2" width="7.2" height="6.2" rx="1" fill="#a9d4f4" stroke="#453a78" stroke-width="0.9"/>
<rect x="36.2" y="11.6" width="7.2" height="6.2" rx="1" fill="#a9d4f4" stroke="#453a78" stroke-width="0.9"/>
<rect x="43.6" y="11.6" width="7.2" height="6.2" rx="1" fill="#a9d4f4" stroke="#453a78" stroke-width="0.9"/>
<rect x="38.2" y="7.2" width="3.2" height="2.2" fill="#a0a8b0"/><rect x="45.6" y="7.2" width="3.2" height="2.2" fill="#a0a8b0"/>
<rect x="38.2" y="13.6" width="3.2" height="2.2" fill="#3a98d8"/><rect x="45.6" y="13.6" width="3.2" height="2.2" fill="#3a98d8"/>
<path d="M54.2 10h5.6l-2.8 3.4z" fill="#222"/>
</g>
</svg>

<!-- timeline -->
<svg class="a" style="left:0;top:958px" width="340" height="50" viewBox="0 958 340 50">
<g fill="#4a4a4a">
<rect x="11" y="975" width="1.8" height="14"/><path d="M13.5 982L23 975.5v13z"/>
<path d="M35.5 982L45 975.5v13z"/><rect x="46" y="979" width="2" height="6"/>
<rect x="62" y="977" width="10" height="10"/>
<rect x="85" y="979" width="2" height="6"/><path d="M88 975.5L97.5 982 88 988.5z"/>
<path d="M110.5 975.5L120 982l-9.5 6.5z"/><rect x="120.8" y="975" width="1.8" height="14"/>
</g>
<path d="M136 967h12v3l-4.5 5h-3l-4.5-5z" fill="#555"/><rect x="141.2" y="972" width="2.3" height="27" fill="#555"/>
<path d="M155 998h167.5M155 992v6.5M178 992v6.5M202 992v6.5M226 992v6.5M250 992v6.5M274 992v6.5M298 992v6.5M322 992v6.5" fill="none" stroke="#c8c8c8" stroke-width="1.4"/>
<g opacity="0.9">
<!-- sketch 1 -->
<path d="M149 974.5h11M147.3 976v10.5M149 986.5h6M159.6 976v4" fill="none" stroke="#c4c4c4" stroke-width="0.8"/>
<g fill="#a8d8f0"><rect x="146.5" y="973.5" width="1.6" height="1.6"/><rect x="159" y="973.5" width="1.6" height="1.6"/><rect x="146.5" y="985.8" width="1.6" height="1.6"/></g>
<path d="M155 987.5l5.5-5.5 1.8 1.8-5.5 5.5z" fill="#f2e4b0"/><path d="M160.5 982l1.2-1.2 1.8 1.8-1.2 1.2z" fill="#f0a8a8"/>
<!-- extrude 1 -->
<path d="M170 976l2-2h10l-2 2z" fill="#d8ecf6"/><rect x="170" y="976" width="10" height="10" fill="#c4e0f0"/><path d="M180 976l2-2v10l-2 2z" fill="#b4d4e8"/>
<path d="M170 986h10l2-2v2l-2 2h-10z" fill="#e8e8e8"/><path d="M184.5 983.5v-9M183 976l1.5-2 1.5 2" fill="none" stroke="#b0b0b0" stroke-width="0.9"/>
<!-- construct 1 -->
<path d="M199 988.5h-4.5v-10l3.5-4h3" fill="none" stroke="#c8c8c8" stroke-width="0.9"/>
<path d="M199 978l4.5-4.5v10.5l-4.5 4.5z" fill="#c4ead0"/><path d="M205 978l4.5-4.5v10.5l-4.5 4.5z" fill="#ead8c8"/>
<!-- sketch 2 -->
<path d="M221 974.5h11M219.3 976v10.5M221 986.5h6M231.6 976v4" fill="none" stroke="#c4c4c4" stroke-width="0.8"/>
<g fill="#a8d8f0"><rect x="218.5" y="973.5" width="1.6" height="1.6"/><rect x="231" y="973.5" width="1.6" height="1.6"/><rect x="218.5" y="985.8" width="1.6" height="1.6"/></g>
<path d="M227 987.5l5.5-5.5 1.8 1.8-5.5 5.5z" fill="#f2e4b0"/><path d="M232.5 982l1.2-1.2 1.8 1.8-1.2 1.2z" fill="#f0a8a8"/>
<!-- loft -->
<path d="M242 973h16v10.5l-4 2.5h-8l-4-2.5z" fill="#d4eaf4"/><path d="M242 973l6 8M258 973l-6 8" stroke="#eaf4fa" stroke-width="0.9"/>
<circle cx="250" cy="985" r="3.4" fill="#f2f2f2" stroke="#bbb" stroke-width="0.8"/>
<!-- extrude 2 -->
<path d="M266 976l2-2h10l-2 2z" fill="#d8ecf6"/><rect x="266" y="976" width="10" height="10" fill="#c4e0f0"/><path d="M276 976l2-2v10l-2 2z" fill="#b4d4e8"/>
<path d="M266 986h10l2-2v2l-2 2h-10z" fill="#e8e8e8"/><path d="M280.5 983.5v-9M279 976l1.5-2 1.5 2" fill="none" stroke="#b0b0b0" stroke-width="0.9"/>
<!-- mirror -->
<path d="M290.5 987.5l5-12.5v12.5z" fill="#fafafa" stroke="#c4c4c4" stroke-width="0.8"/><path d="M298.5 975l5.5 12.5h-5.5z" fill="#c4e2f0"/>
<!-- shell -->
<path d="M314.5 976l2.5-3h12.5v11l-2.5 3.5h-12.5z" fill="#f2f2f2" stroke="#c8c8c8" stroke-width="0.9"/><path d="M327 976l2.5-3v11l-2.5 3.5z" fill="#e4e4e4"/>
<path d="M316.5 978.5h2.8v3.8h5v3.3h-7.8z" fill="#c8e2f0"/>
</g>
<circle cx="106.5" cy="995.4" r="5" fill="none" stroke="#2a90e0" stroke-width="3"/>
<path d="M92.5 995V1010l3.5-3.5h8z" fill="#fff" stroke="#222" stroke-width="0.9"/>
</svg>

<!--BODY-->
</body></html>
